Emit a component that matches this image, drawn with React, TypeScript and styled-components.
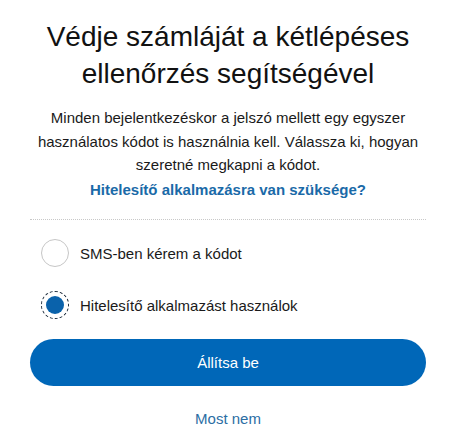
import React, { useState } from "react";
import styled, { createGlobalStyle } from "styled-components";

const Global = createGlobalStyle`
  html, body { margin: 0; padding: 0; background: #ffffff; }
  body { font-family: "Liberation Sans", Arial, sans-serif; color: #1a1a1a; }
`;

const Page = styled.main`
  width: 396px;
  margin-left: 30px;
  padding-top: 18px;
  display: flex;
  flex-direction: column;
`;

const Title = styled.h1`
  margin: 0;
  font-size: 28px;
  line-height: 37px;
  font-weight: 400;
  text-align: center;
  color: #111111;
`;

const Intro = styled.p`
  margin: 14px 0 0;
  font-size: 15px;
  line-height: 23.5px;
  text-align: center;
  color: #1a1a1a;
`;

const HelpLink = styled.a`
  display: block;
  margin-top: 1px;
  font-size: 15px;
  line-height: 23.5px;
  font-weight: 700;
  text-align: center;
  color: #1a6aa8;
  text-decoration: none;
`;

const Divider = styled.hr`
  margin: 18px 0 0;
  border: 0;
  border-top: 1px dotted #c8c8c8;
  height: 0;
`;

const Options = styled.div`
  display: flex;
  flex-direction: column;
  gap: 24px;
  padding: 19px 0 0 11px;
`;

const Option = styled.label`
  display: flex;
  align-items: center;
  gap: 11px;
  font-size: 15px;
  color: #1a1a1a;
  cursor: pointer;
`;

const RadioRing = styled.span<{ $checked: boolean }>`
  box-sizing: border-box;
  width: 28px;
  height: 28px;
  border-radius: 50%;
  border: 1px ${(p) => (p.$checked ? "dashed #1d2c3c" : "solid #c6c6c6")};
  display: flex;
  align-items: center;
  justify-content: center;
  flex: none;
`;

const RadioDot = styled.span`
  width: 18px;
  height: 18px;
  border-radius: 50%;
  background: #0a62ab;
`;

const Primary = styled.button`
  margin-top: 20px;
  height: 47px;
  width: 100%;
  border: 0;
  border-radius: 24px;
  background: #0067b8;
  color: #ffffff;
  font-family: "Liberation Sans", Arial, sans-serif;
  font-size: 15px;
  cursor: pointer;
`;

const Secondary = styled.a`
  margin-top: 24px;
  font-size: 15px;
  line-height: 18px;
  text-align: center;
  color: #2c6ea4;
  text-decoration: none;
`;

export default function App() {
  const [choice, setChoice] = useState("app");
  const opts = [
    { id: "sms", label: "SMS-ben kérem a kódot" },
    { id: "app", label: "Hitelesítő alkalmazást használok" },
  ];
  return (
    <>
      <Global />
      <Page>
        <Title>Védje számláját a kétlépéses ellenőrzés segítségével</Title>
        <Intro>
          Minden bejelentkezéskor a jelszó mellett egy egyszer használatos kódot is
          használnia kell. Válassza ki, hogyan szeretné megkapni a kódot.
        </Intro>
        <HelpLink href="#">Hitelesítő alkalmazásra van szüksége?</HelpLink>
        <Divider />
        <Options>
          {opts.map((o) => (
            <Option key={o.id} onClick={() => setChoice(o.id)}>
              <RadioRing $checked={choice === o.id}>
                {choice === o.id && <RadioDot />}
              </RadioRing>
              {o.label}
            </Option>
          ))}
        </Options>
        <Primary>Állítsa be</Primary>
        <Secondary href="#">Most nem</Secondary>
      </Page>
    </>
  );
}
